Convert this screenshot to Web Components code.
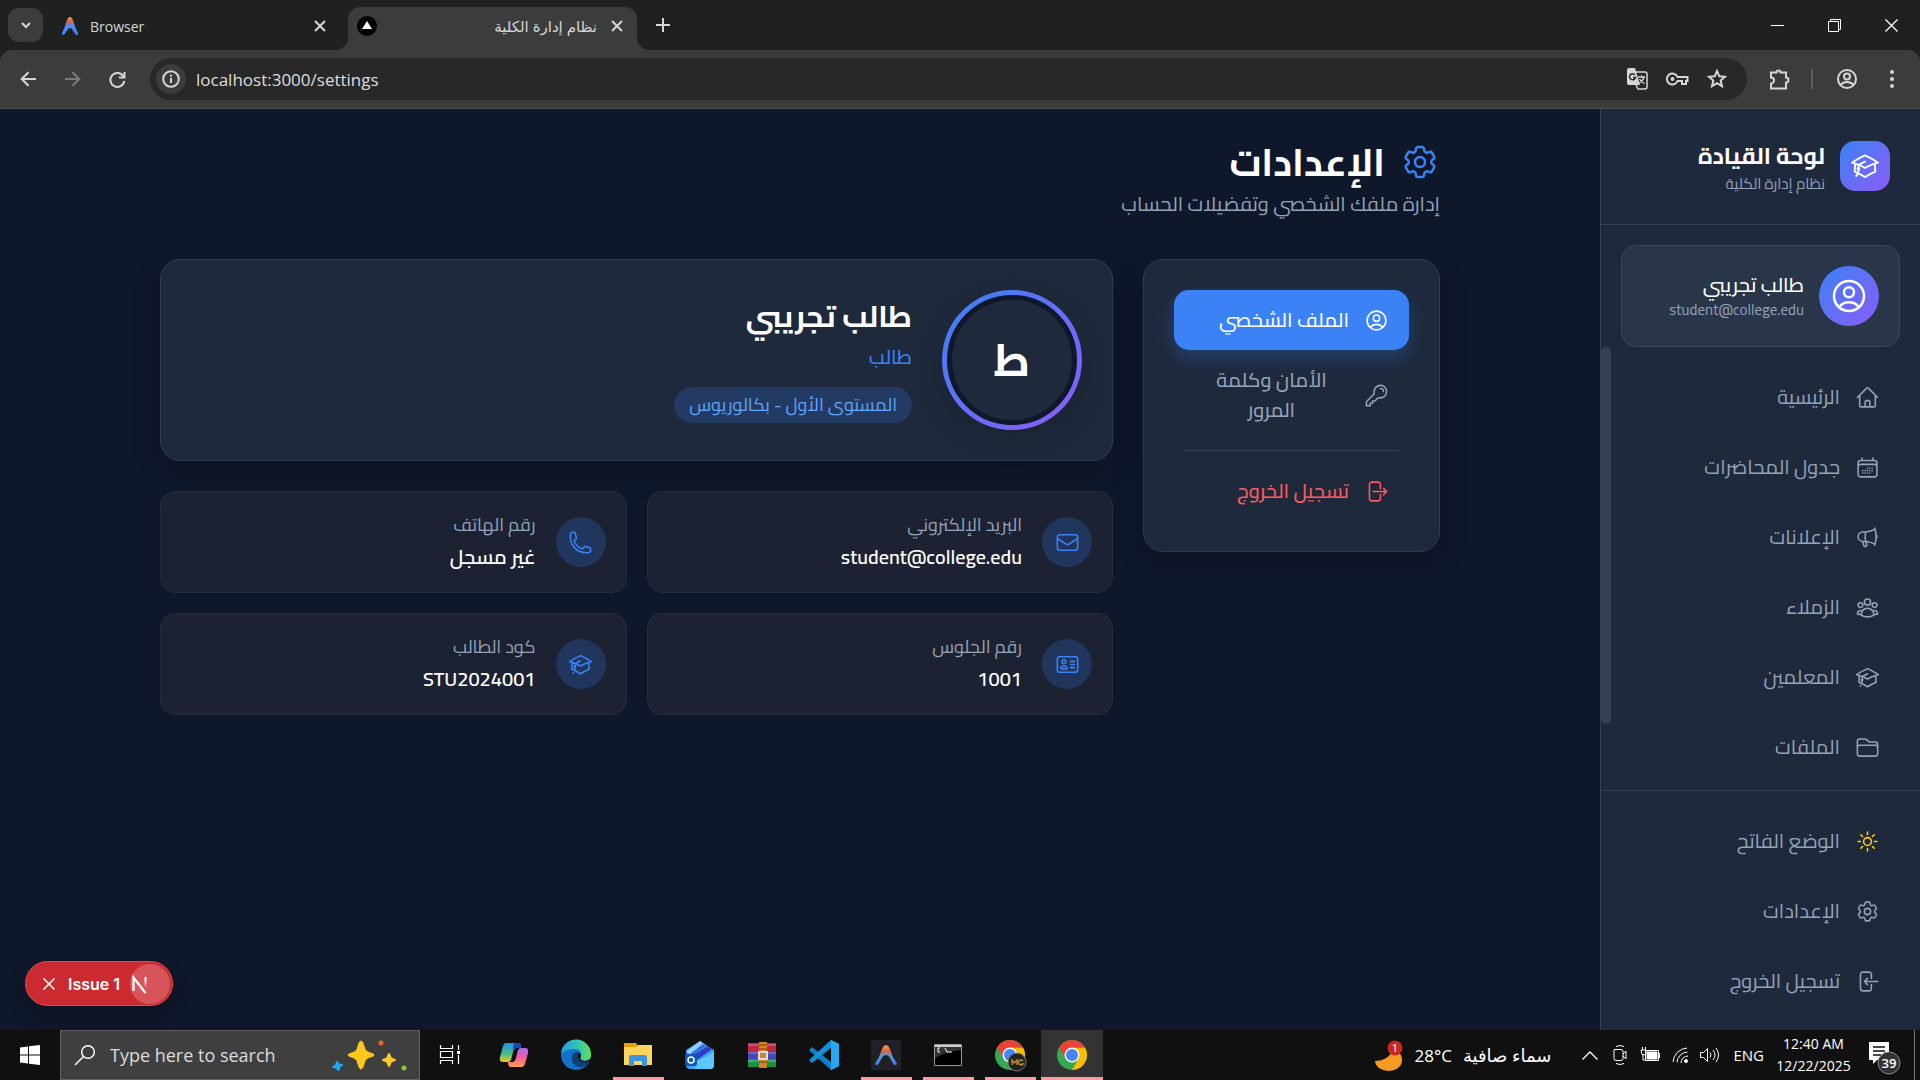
<!DOCTYPE html>
<html lang="ar">
<head>
<meta charset="utf-8">
<title>نظام إدارة الكلية</title>
<style>
:root
{
    --ui: "Segoe UI", "Open Sans", "Noto Sans", "DejaVu Sans", sans-serif;
    --app: Cairo, "Noto Sans", "DejaVu Sans", sans-serif;
    --page: #0f172a;
    --panel: #1e293b;
    --line: #334155;
    --muted: #94a3b8;
    --blue: #3b82f6;
    --grad: linear-gradient(135deg, #3b82f6, #8b5cf6);
}

body
{
    margin: 0;
    min-height: 100vh;
    display: flex;
    flex-direction: column;
    background: var(--page);
    font-family: var(--app);
    color: #fff;
}
</style>
</head>
<body>

<browser-bar></browser-bar>

<app-shell dir="rtl">
    <side-bar slot="side">
        <user-chip slot="user" name="طالب تجريبي" mail="student@college.edu"></user-chip>
        <nav-item icon="home">الرئيسية</nav-item>
        <nav-item icon="calendar">جدول المحاضرات</nav-item>
        <nav-item icon="megaphone">الإعلانات</nav-item>
        <nav-item icon="group">الزملاء</nav-item>
        <nav-item icon="cap">المعلمين</nav-item>
        <nav-item icon="folder">الملفات</nav-item>
        <nav-item slot="foot" icon="sun" tint="#facc15">الوضع الفاتح</nav-item>
        <nav-item slot="foot" icon="cog">الإعدادات</nav-item>
        <nav-item slot="foot" icon="enter">تسجيل الخروج</nav-item>
    </side-bar>
    <settings-page>
        <settings-menu slot="menu"></settings-menu>
        <profile-card></profile-card>
        <info-grid>
            <info-card icon="mail" label="البريد الإلكتروني">student@college.edu</info-card>
            <info-card icon="phone" label="رقم الهاتف">غير مسجل</info-card>
            <info-card icon="id" label="رقم الجلوس">1001</info-card>
            <info-card icon="cap" label="كود الطالب">STU2024001</info-card>
        </info-grid>
    </settings-page>
</app-shell>

<issue-badge></issue-badge>
<task-bar></task-bar>

<script>
const icons = {
    cap: 'M4.26 10.147a60.438 60.438 0 0 0-.491 6.347A48.62 48.62 0 0 1 12 20.904a48.62 48.62 0 0 1 8.232-4.41 60.46 60.46 0 0 0-.491-6.347m-15.482 0a50.636 50.636 0 0 0-2.658-.813A59.906 59.906 0 0 1 12 3.493a59.903 59.903 0 0 1 10.399 5.84c-.896.248-1.783.52-2.658.814m-15.482 0A50.717 50.717 0 0 1 12 13.489a50.702 50.702 0 0 1 7.74-3.342M6.75 15a.75.75 0 1 0 0-1.5.75.75 0 0 0 0 1.5Zm0 0v-3.675A55.378 55.378 0 0 1 12 8.443m-7.007 11.55A5.981 5.981 0 0 0 6.75 15.75v-1.5',
    home: 'm2.25 12 8.954-8.955c.44-.439 1.152-.439 1.591 0L21.75 12M4.5 9.75v10.125c0 .621.504 1.125 1.125 1.125H9.75v-4.875c0-.621.504-1.125 1.125-1.125h2.25c.621 0 1.125.504 1.125 1.125V21h4.125c.621 0 1.125-.504 1.125-1.125V9.75M8.25 21h8.25',
    calendar: 'M6.75 3v2.25M17.25 3v2.25M3 18.75V7.5a2.25 2.25 0 0 1 2.25-2.25h13.5A2.25 2.25 0 0 1 21 7.5v11.25m-18 0A2.25 2.25 0 0 0 5.25 21h13.5A2.25 2.25 0 0 0 21 18.75m-18 0v-7.5A2.25 2.25 0 0 1 5.25 9h13.5A2.25 2.25 0 0 1 21 11.25v7.5m-9-6h.008v.008H12v-.008ZM12 15h.008v.008H12V15Zm0 2.25h.008v.008H12v-.008ZM9.75 15h.008v.008H9.75V15Zm0 2.25h.008v.008H9.75v-.008ZM7.5 15h.008v.008H7.5V15Zm0 2.25h.008v.008H7.5v-.008Zm6.75-4.5h.008v.008h-.008v-.008Zm0 2.25h.008v.008h-.008V15Zm0 2.25h.008v.008h-.008v-.008Zm2.25-4.5h.008v.008H16.5v-.008Zm0 2.25h.008v.008H16.5V15Z',
    megaphone: 'M10.34 15.84c-.688-.06-1.386-.09-2.09-.09H7.5a4.5 4.5 0 1 1 0-9h.75c.704 0 1.402-.03 2.09-.09m0 9.18c.253.962.584 1.892.985 2.783.247.55.06 1.21-.463 1.511l-.657.38c-.551.318-1.26.117-1.527-.461a20.845 20.845 0 0 1-1.44-4.282m3.102.069a18.03 18.03 0 0 1-.59-4.59c0-1.586.205-3.124.59-4.59m0 9.18a23.848 23.848 0 0 1 8.835 2.535M10.34 6.66a23.847 23.847 0 0 0 8.835-2.535m0 0A23.74 23.74 0 0 0 18.795 3m.38 1.125a23.91 23.91 0 0 1 1.014 5.395m-1.014 8.855c-.118.38-.245.754-.38 1.125m.38-1.125a23.91 23.91 0 0 0 1.014-5.395m0-3.46c.495.413.811 1.035.811 1.73 0 .695-.316 1.317-.811 1.73m0-3.46a24.347 24.347 0 0 1 0 3.46',
    group: 'M18 18.72a9.094 9.094 0 0 0 3.741-.479 3 3 0 0 0-4.682-2.72m.94 3.198.001.031c0 .225-.012.447-.037.666A11.944 11.944 0 0 1 12 21c-2.17 0-4.207-.576-5.963-1.584A6.062 6.062 0 0 1 6 18.719m12 0a5.971 5.971 0 0 0-.941-3.197m0 0A5.995 5.995 0 0 0 12 12.75a5.995 5.995 0 0 0-5.058 2.772m0 0a3 3 0 0 0-4.681 2.72 8.986 8.986 0 0 0 3.74.477m.94-3.197a5.971 5.971 0 0 0-.94 3.197M15 6.75a3 3 0 1 1-6 0 3 3 0 0 1 6 0Zm6 3a2.25 2.25 0 1 1-4.5 0 2.25 2.25 0 0 1 4.5 0Zm-13.5 0a2.25 2.25 0 1 1-4.5 0 2.25 2.25 0 0 1 4.5 0Z',
    folder: 'M2.25 12.75V12A2.25 2.25 0 0 1 4.5 9.75h15A2.25 2.25 0 0 1 21.75 12v.75m-8.69-6.44-2.12-2.12a1.5 1.5 0 0 0-1.061-.44H4.5A2.25 2.25 0 0 0 2.25 6v12a2.25 2.25 0 0 0 2.25 2.25h15A2.25 2.25 0 0 0 21.75 18V9a2.25 2.25 0 0 0-2.25-2.25h-5.379a1.5 1.5 0 0 1-1.06-.44Z',
    sun: 'M12 3v2.25m6.364.386-1.591 1.591M21 12h-2.25m-.386 6.364-1.591-1.591M12 18.75V21m-4.773-4.227-1.591 1.591M5.25 12H3m4.227-4.773L5.636 5.636M15.75 12a3.75 3.75 0 1 1-7.5 0 3.75 3.75 0 0 1 7.5 0Z',
    cog: 'M9.594 3.94c.09-.542.56-.94 1.11-.94h2.593c.55 0 1.02.398 1.11.94l.213 1.281c.063.374.313.686.645.87.074.04.147.083.22.127.325.196.72.257 1.075.124l1.217-.456a1.125 1.125 0 0 1 1.37.49l1.296 2.247a1.125 1.125 0 0 1-.26 1.431l-1.003.827c-.293.241-.438.613-.43.992a7.723 7.723 0 0 1 0 .255c-.008.378.137.75.43.991l1.004.827c.424.35.534.955.26 1.43l-1.298 2.247a1.125 1.125 0 0 1-1.369.491l-1.217-.456c-.355-.133-.75-.072-1.076.124a6.47 6.47 0 0 1-.22.128c-.331.183-.581.495-.644.869l-.213 1.281c-.09.543-.56.94-1.11.94h-2.594c-.55 0-1.019-.398-1.11-.94l-.213-1.281c-.062-.374-.312-.686-.644-.87a6.52 6.52 0 0 1-.22-.127c-.325-.196-.72-.257-1.076-.124l-1.217.456a1.125 1.125 0 0 1-1.369-.49l-1.297-2.247a1.125 1.125 0 0 1 .26-1.431l1.004-.827c.292-.24.437-.613.43-.991a6.932 6.932 0 0 1 0-.255c.007-.38-.138-.751-.43-.992l-1.004-.827a1.125 1.125 0 0 1-.26-1.43l1.297-2.247a1.125 1.125 0 0 1 1.37-.491l1.216.456c.356.133.751.072 1.076-.124.072-.044.146-.086.22-.128.332-.183.582-.495.644-.869l.214-1.28ZM15 12a3 3 0 1 1-6 0 3 3 0 0 1 6 0Z',
    enter: 'M15.75 9V5.25A2.25 2.25 0 0 0 13.5 3h-6a2.25 2.25 0 0 0-2.25 2.25v13.5A2.25 2.25 0 0 0 7.5 21h6a2.25 2.25 0 0 0 2.25-2.25V15M12 9l-3 3m0 0 3 3m-3-3h12.75',
    leave: 'M15.75 9V5.25A2.25 2.25 0 0 0 13.5 3h-6a2.25 2.25 0 0 0-2.25 2.25v13.5A2.25 2.25 0 0 0 7.5 21h6a2.25 2.25 0 0 0 2.25-2.25V15m3 0 3-3m0 0-3-3m3 3H9',
    user: 'M17.982 18.725A7.488 7.488 0 0 0 12 15.75a7.488 7.488 0 0 0-5.982 2.975m11.963 0a9 9 0 1 0-11.963 0m11.963 0A8.966 8.966 0 0 1 12 21a8.966 8.966 0 0 1-5.982-2.275M15 9.75a3 3 0 1 1-6 0 3 3 0 0 1 6 0Z',
    key: 'M15.75 5.25a3 3 0 0 1 3 3m3 0a6 6 0 0 1-7.029 5.912c-.563-.097-1.159.026-1.563.43L10.5 17.25H8.25v2.25H6v2.25H2.25v-2.818c0-.597.237-1.17.659-1.591l6.499-6.499c.404-.404.527-1 .43-1.563A6 6 0 1 1 21.75 8.25Z',
    mail: 'M21.75 6.75v10.5a2.25 2.25 0 0 1-2.25 2.25h-15a2.25 2.25 0 0 1-2.25-2.25V6.75m19.5 0A2.25 2.25 0 0 0 19.5 4.5h-15a2.25 2.25 0 0 0-2.25 2.25m19.5 0v.243a2.25 2.25 0 0 1-1.07 1.916l-7.5 4.615a2.25 2.25 0 0 1-2.36 0L3.32 8.91a2.25 2.25 0 0 1-1.07-1.916V6.75',
    phone: 'M2.25 6.75c0 8.284 6.716 15 15 15h2.25a2.25 2.25 0 0 0 2.25-2.25v-1.372c0-.516-.351-.966-.852-1.091l-4.423-1.106c-.44-.11-.902.055-1.173.417l-.97 1.293c-.282.376-.769.542-1.21.38a12.035 12.035 0 0 1-7.143-7.143c-.162-.441.004-.928.38-1.21l1.293-.97c.363-.271.527-.734.417-1.173L6.963 3.102a1.125 1.125 0 0 0-1.091-.852H4.5A2.25 2.25 0 0 0 2.25 4.5v2.25Z',
    id: 'M15 9h3.75M15 12h3.75M15 15h3.75M4.5 19.5h15a2.25 2.25 0 0 0 2.25-2.25V6.75A2.25 2.25 0 0 0 19.5 4.5h-15a2.25 2.25 0 0 0-2.25 2.25v10.5A2.25 2.25 0 0 0 4.5 19.5Zm6-10.125a1.875 1.875 0 1 1-3.75 0 1.875 1.875 0 0 1 3.75 0Zm1.294 6.336a6.721 6.721 0 0 1-3.17.789 6.721 6.721 0 0 1-3.168-.789 3.376 3.376 0 0 1 6.338 0Z'
}

// every element draws its own template, filled from its attributes
class Base extends HTMLElement
{
    constructor()
    {
        super()
        this.attachShadow({mode:'open'})
    }

    connectedCallback()
    {
        this.shadowRoot.innerHTML = `<style>* { box-sizing: border-box; } :host { display: block; box-sizing: border-box; }
            button { font: inherit; color: inherit; background: none; border: 0; padding: 0; cursor: pointer; }</style>` + this.render()
    }

    at(name)
    {
        return this.getAttribute(name) || ''
    }
}

class LineIcon extends Base
{
    render()
    {
        const size = this.at('size') || 25
        return `<style>:host { flex: none; width: ${size}px; height: ${size}px; } svg { display: block; }</style>
        <svg width="${size}" height="${size}" viewBox="0 0 24 24" fill="none" stroke="currentColor" stroke-width="1.5" stroke-linecap="round" stroke-linejoin="round"><path d="${icons[this.at('name')]}"/></svg>`
    }
}

class BrowserBar extends Base
{
    render()
    {
        return `
        <style>
        :host { flex: none; font-family: var(--ui); color: #d6d6d6; background: #1f2120; }
        svg { display: block; fill: none; stroke: currentColor; stroke-width: 2; }
        .strip { display: flex; align-items: center; height: 50px; padding-left: 8px; font-size: 14px; }
        .strip button, .tools button { flex: none; display: grid; place-items: center; }
        .menu { width: 35px; height: 34px; background: #3c3c3c; border-radius: 11px; }
        .tab { display: flex; align-items: center; width: 289px; height: 43px; margin-top: 7px; padding: 0 14px 5px 9px; gap: 14px; }
        .tab span { flex: 1; }
        .idle { width: 305px; padding: 0 22px 5px 19px; gap: 12px; }
        .live { background: #3c3c3c; border-radius: 12px 12px 0 0; position: relative; font-size: 15px; }
        .live::before, .live::after { content: ""; position: absolute; bottom: 0; width: 12px; height: 12px; }
        .live::before { left: -12px; background: radial-gradient(circle at 0 0, transparent 12px, #3c3c3c 12px); }
        .live::after { right: -12px; background: radial-gradient(circle at 100% 0, transparent 12px, #3c3c3c 12px); }
        .plus { width: 52px; height: 34px; }
        .win { display: flex; margin-left: auto; color: #fff; }
        .win svg { stroke-width: 1; }
        .win button { width: 57px; height: 48px; }
        .tools { display: flex; align-items: center; height: 59px; padding: 0 6px 0 5px; background: #3c3c3c; border-radius: 12px 12px 0 0; border-bottom: 1px solid #4a4a4a; }
        .tools > button { width: 45px; height: 40px; }
        .address { flex: 1; display: flex; align-items: center; height: 42px; margin-left: 10px; padding: 0 10px 0 6px; background: #282828; border-radius: 21px; }
        .info { width: 30px; height: 30px; border-radius: 15px; background: #3c3c3c; }
        .address input { flex: 1; margin-left: 10px; padding: 0; border: 0; background: none; color: #dedede; font: 17px var(--ui); }
        .address .act { width: 40px; height: 40px; }
        .tools .dim { color: #7a7a7a; }
        .tools .ext { width: 64px; }
        hr { width: 2px; height: 20px; margin: 0 11px 0 0; border: 0; background: #5c5c5c; }
        </style>
        <div class="strip">
            <button class="menu" aria-label="tabs"><svg width="12" height="12" viewBox="0 0 12 12"><path d="M2 4l4 4 4-4"/></svg></button>
            <div class="tab idle">
                <svg width="16" height="18" viewBox="0 0 16 18"><defs><linearGradient id="g" x2="0" y2="1"><stop offset="0" stop-color="#f2a33a"/><stop offset=".25" stop-color="#e0604c"/><stop offset=".5" stop-color="#4b8df8"/><stop offset="1" stop-color="#3b82f6"/></linearGradient></defs><path d="M8 0c3 0 4 7 6 12 1 2 3 5 1.500 6C12 18 11 11 8 11s-4 7-7.500 7C-1 17 1 14 2 12 4 7 5 0 8 0z" fill="url(#g)" stroke="none"/></svg>
                <span>Browser</span>
                <button aria-label="close"><svg width="12" height="12" viewBox="0 0 12 12"><path d="M1 1l10 10M11 1L1 11"/></svg></button>
            </div>
            <div class="tab live">
                <svg width="20" height="20" viewBox="0 0 20 20"><circle cx="10" cy="10" r="10" fill="#000" stroke="none"/><path d="M10 5l5 8H5z" fill="#fff" stroke="none"/></svg>
                <span dir="rtl">نظام إدارة الكلية</span>
                <button aria-label="close"><svg width="12" height="12" viewBox="0 0 12 12"><path d="M1 1l10 10M11 1L1 11"/></svg></button>
            </div>
            <button class="plus" aria-label="new tab"><svg width="14" height="14" viewBox="0 0 14 14"><path d="M7 0v14M0 7h14"/></svg></button>
            <div class="win">
                <button aria-label="minimize"><svg width="13" height="13" viewBox="0 0 13 13"><path d="M0 6.500h13"/></svg></button>
                <button aria-label="restore"><svg width="13" height="13" viewBox="0 0 13 13"><path d="M.5 2.500h10v10H.5zM2.500 2.500v-2h10v10h-2"/></svg></button>
                <button aria-label="close"><svg width="13" height="13" viewBox="0 0 13 13" style="stroke-width:1.300"><path d="M.5.5l12 12M12.500.5l-12 12"/></svg></button>
            </div>
        </div>
        <div class="tools">
            <button aria-label="back"><svg width="16" height="16" viewBox="0 0 16 16"><path d="M16 8H2M8.500 1.200L1.700 8l6.800 6.800"/></svg></button>
            <button class="dim" aria-label="forward"><svg width="16" height="16" viewBox="0 0 16 16"><path d="M0 8h14M7.500 1.200L14.300 8l-6.800 6.800"/></svg></button>
            <button aria-label="reload"><svg width="17" height="17" viewBox="0 0 17 17"><path d="M14.500 5.500A7 7 0 1 0 15.300 10M15.500 1v5.500H10"/></svg></button>
            <div class="address">
                <button class="info" aria-label="site info"><svg width="18" height="18" viewBox="0 0 18 18"><circle cx="9" cy="9" r="7.800"/><path d="M9 8v5M9 4.800v2"/></svg></button>
                <input aria-label="address" value="localhost:3000/settings">
                <button class="act" aria-label="translate"><svg width="22" height="22" viewBox="0 0 22 22"><path d="M10 4h9a2 2 0 0 1 2 2v13a2 2 0 0 1-2 2h-7l-2-4" style="stroke-width:1.500"/><path d="M1 2a2 2 0 0 1 2-2h6l5 17H3a2 2 0 0 1-2-2z" fill="currentColor" stroke="none"/><path d="M9 7a3 3 0 1 0 .5 2.500H7" style="stroke:#282828;stroke-width:1.500"/><path d="M12 9h7M15.500 7.500V9M18 9c-1 4-3 5-5 6M13.500 11c1 2 3 3.500 5 4.500" style="stroke-width:1.300"/></svg></button>
                <button class="act" aria-label="passwords"><svg width="24" height="16" viewBox="0 0 24 16"><path d="M12.500 6h10v4H21v3h-4v-3h-4.500a5.500 5.500 0 1 1 0-4z"/><circle cx="7.500" cy="8" r="2" fill="currentColor" stroke="none"/></svg></button>
                <button class="act" aria-label="bookmark"><svg width="20" height="20" viewBox="0 0 20 20"><path d="M10 2l2.300 5.300 5.700.5-4.300 3.800 1.300 5.600-5-3-5 3 1.300-5.600L2 7.800l5.700-.5z"/></svg></button>
            </div>
            <button class="ext" aria-label="extensions"><svg width="22" height="22" viewBox="0 0 22 22"><path d="M3 4.500h5.500a2 2 0 0 1 4 0H18v5a2 2 0 0 1 0 5v6H3v-5a3 3 0 0 0 0-6z"/></svg></button>
            <hr>
            <button aria-label="profile"><svg width="22" height="22" viewBox="0 0 22 22"><circle cx="11" cy="11" r="9"/><circle cx="11" cy="8.500" r="3"/><path d="M4.500 17c3-4 10-4 13 0"/></svg></button>
            <button aria-label="more"><svg width="6" height="18" viewBox="0 0 6 18"><g fill="currentColor" stroke="none"><circle cx="3" cy="2" r="2"/><circle cx="3" cy="9" r="2"/><circle cx="3" cy="16" r="2"/></g></svg></button>
        </div>`
    }
}

class AppShell extends Base
{
    render()
    {
        return `
        <style>
        :host { flex: 1; display: flex; }
        ::slotted(side-bar) { flex: none; width: 320px; }
        main { flex: 1; min-width: 0; }
        </style>
        <slot name="side"></slot>
        <main><slot></slot></main>`
    }
}

class SideBar extends Base
{
    render()
    {
        return `
        <style>
        :host { display: flex; flex-direction: column; background: var(--panel); border-left: 1px solid var(--line); }
        header { display: flex; gap: 15px; padding: 32px 30px 27px; border-bottom: 1px solid var(--line); }
        .logo { flex: none; width: 50px; height: 50px; display: grid; place-items: center; border-radius: 15px; background: var(--grad); }
        h2 { margin: 0; font-size: 23px; line-height: 30px; }
        p { margin: 0; font-size: 15px; line-height: 26px; color: var(--muted); }
        .user { padding: 20px 20px 0; }
        nav { flex: 1; position: relative; padding: 20px 20px 13px; display: flex; flex-direction: column; gap: 10px; }
        /* scroll thumb floats over the list edge */
        nav::after { content: ""; position: absolute; left: 0; top: 0; width: 10px; height: 85%; border-radius: 5px; background: var(--line); }
        footer { display: flex; flex-direction: column; gap: 10px; padding: 20px 20px 19px; border-top: 1px solid var(--line); }
        </style>
        <header>
            <div class="logo"><line-icon name="cap" size="30"></line-icon></div>
            <div><h2>لوحة القيادة</h2><p>نظام إدارة الكلية</p></div>
        </header>
        <div class="user"><slot name="user"></slot></div>
        <nav><slot></slot></nav>
        <footer><slot name="foot"></slot></footer>`
    }
}

class UserChip extends Base
{
    render()
    {
        return `
        <style>
        :host { display: flex; gap: 15px; align-items: center; padding: 20px; background: #293548; border: 1px solid #3a475a; border-radius: 15px; }
        .face { flex: none; width: 60px; height: 60px; display: grid; place-items: center; border-radius: 50%; background: var(--grad); }
        b { display: block; font-size: 20px; font-weight: 500; line-height: 28px; }
        small { display: block; font-size: 15px; line-height: 22px; color: var(--muted); }
        </style>
        <div class="face"><line-icon name="user" size="40"></line-icon></div>
        <div><b>${this.at('name')}</b><small>${this.at('mail')}</small></div>`
    }
}

class NavItem extends Base
{
    render()
    {
        return `
        <style>
        a { display: flex; align-items: center; gap: 15px; height: 60px; padding: 0 20px; color: var(--muted); text-decoration: none; font-size: 20px; line-height: 30px; white-space: nowrap; }
        line-icon { color: ${this.at('tint') || 'inherit'}; }
        </style>
        <a href="#"><line-icon name="${this.at('icon')}"></line-icon><slot></slot></a>`
    }
}

class SettingsPage extends Base
{
    render()
    {
        return `
        <style>
        :host { max-width: 1280px; margin: 0 auto; padding-top: 30px; }
        h1 { display: flex; align-items: center; gap: 15px; margin: 0 0 4px; font-size: 38px; line-height: 46px; }
        h1 line-icon { color: var(--blue); }
        p { margin: 0 0 40px; font-size: 20px; line-height: 30px; color: var(--muted); }
        .cols { display: flex; align-items: flex-start; gap: 30px; }
        .menu { flex: none; width: 297px; }
        .body { flex: 1; display: flex; flex-direction: column; gap: 30px; }
        </style>
        <h1><line-icon name="cog" size="40"></line-icon>الإعدادات</h1>
        <p>إدارة ملفك الشخصي وتفضيلات الحساب</p>
        <div class="cols">
            <div class="menu"><slot name="menu"></slot></div>
            <div class="body"><slot></slot></div>
        </div>`
    }
}

class SettingsMenu extends Base
{
    render()
    {
        return `
        <style>
        :host { padding: 30px; background: var(--panel); border: 1px solid #303c4e; border-radius: 20px; box-shadow: 0 10px 30px rgba(0, 0, 0, .15); }
        button { display: flex; align-items: center; gap: 15px; width: 100%; padding: 15px 20px; border-radius: 15px; font-size: 20px; font-weight: 500; line-height: 30px; color: var(--muted); }
        .on { background: var(--blue); color: #fff; box-shadow: 0 8px 20px rgba(59, 130, 246, .3); }
        .two span { flex: 1; }
        .out { color: #ff5a5f; }
        hr { margin: 10px; border: 0; height: 1px; background: #374355; }
        </style>
        <button class="on"><line-icon name="user"></line-icon><span>الملف الشخصي</span></button>
        <button class="two"><line-icon name="key"></line-icon><span>الأمان وكلمة المرور</span></button>
        <hr>
        <button class="out"><line-icon name="leave"></line-icon><span>تسجيل الخروج</span></button>`
    }
}

class ProfileCard extends Base
{
    render()
    {
        return `
        <style>
        :host { display: flex; align-items: center; gap: 30px; padding: 30px; background: var(--panel); border: 1px solid #303c4e; border-radius: 20px; box-shadow: 0 10px 30px rgba(0, 0, 0, .15); }
        .ring { flex: none; width: 140px; height: 140px; padding: 5px; border-radius: 50%; background: var(--grad); box-shadow: 0 10px 30px rgba(0, 0, 0, .15); }
        .face { width: 130px; height: 130px; display: grid; place-items: center; border: 5px solid var(--page); border-radius: 50%; background: var(--panel); font-size: 45px; font-weight: 700; line-height: 60px; }
        h2 { margin: 0 0 8px; font-size: 30px; line-height: 36px; }
        p { margin: 0 0 15px; font-size: 20px; font-weight: 500; line-height: 30px; color: var(--blue); }
        .level { display: inline-block; padding: 0 15px; border-radius: 18px; background: #233a62; color: #60a5fa; font-size: 18px; line-height: 36px; vertical-align: top; }
        </style>
        <div class="ring"><div class="face">ط</div></div>
        <div><h2>طالب تجريبي</h2><p>طالب</p><span class="level">المستوى الأول - بكالوريوس</span></div>`
    }
}

class InfoGrid extends Base
{
    render()
    {
        return `
        <style>:host { display: grid; grid-template-columns: 1fr 1fr; gap: 20px; }</style>
        <slot></slot>`
    }
}

class InfoCard extends Base
{
    render()
    {
        return `
        <style>
        :host { display: flex; align-items: center; gap: 20px; padding: 20px; background: #1d2233; border: 1px solid #272c3d; border-radius: 15px; }
        .dot { flex: none; width: 50px; height: 50px; display: grid; place-items: center; border-radius: 50%; background: #21365c; color: var(--blue); }
        small { display: block; margin-bottom: 4px; font-size: 18px; line-height: 26px; color: var(--muted); }
        b { display: block; font-size: 20px; font-weight: 600; line-height: 30px; }
        </style>
        <div class="dot"><line-icon name="${this.at('icon')}"></line-icon></div>
        <div><small>${this.at('label')}</small><b><slot></slot></b></div>`
    }
}

class IssueBadge extends Base
{
    render()
    {
        return `
        <style>
        /* dev overlay, floats above the page corner */
        :host { position: absolute; left: 25px; bottom: 74px; display: flex; align-items: center; height: 45px; padding: 0 2px 0 17px; background: #ca2a30; border: 1px solid #e5484d; border-radius: 23px; font: 600 16px Inter, sans-serif; box-shadow: 0 8px 20px rgba(0, 0, 0, .2); }
        svg { display: block; fill: none; stroke: #fff; }
        .label { margin: 0 10px 0 13px; }
        .n { width: 40px; height: 40px; border-radius: 50%; background: #d6555b; }
        </style>
        <button aria-label="dismiss"><svg width="12" height="12" viewBox="0 0 12 12" stroke-width="1.500"><path d="M.5.5l11 11M11.500.5l-11 11"/></svg></button>
        <button class="label">Issue 1</button>
        <button class="n" aria-label="dev tools"><svg width="40" height="40" viewBox="0 0 40 40"><defs><linearGradient id="f" x2="0" y2="1"><stop offset=".2" stop-color="#fff"/><stop offset="1" stop-color="#fff" stop-opacity="0"/></linearGradient></defs><path d="M3.500 27V13.500L15.500 29" stroke-width="2.200"/><path d="M14.500 13h2v11h-2z" fill="url(#f)" stroke="none"/></svg></button>`
    }
}

class TaskBar extends Base
{
    render()
    {
        const chrome = `<circle cx="15" cy="15" r="15" fill="#34a853"/><path d="M15 7.500h13A15 15 0 0 1 15 30l6.500-11.250z" fill="#fbbc04"/><path d="M2 7.500A15 15 0 0 1 28 7.500H15L8.500 18.750z" fill="#ea4335"/><circle cx="15" cy="15" r="7.500" fill="#fff"/><circle cx="15" cy="15" r="6" fill="#4285f4"/>`
        const apps = [
            ['task view', '', `<g fill="none" stroke="#fff"><path d="M3.500 5v3.500h12V5M3.500 24v-3.500h12V24M3.500 11.500h12v6h-12zM21.500 5v5M21.500 15v9" stroke-width="1.200"/></g><path d="M20 11h3v3h-3z" fill="#fff"/>`],
            ['copilot', '', `<defs><linearGradient id="c1" x2="0" y2="1"><stop stop-color="#2196e8"/><stop offset=".55" stop-color="#3fbd8b"/><stop offset="1" stop-color="#f5c91d"/></linearGradient><linearGradient id="c2" x2="0" y2="1"><stop stop-color="#a76bf5"/><stop offset=".5" stop-color="#ef5d9d"/><stop offset="1" stop-color="#ff9f4a"/></linearGradient></defs><path d="M7 3h12q3 0 3 5h-5q-2 0-3 4l-2 8q-1 2-3 2H4q-4 0-3-5L4 6q1-3 3-3z" fill="url(#c1)"/><path d="M15 3h5q1 0 2 5h-6q-2 0-3 3z" fill="#1a43c4"/><path d="M23 27H12q-3 0-3-5h4q3 0 4-4l2-8q1-2 3-2h4q4 0 3 5l-3 11q-1 3-3 3z" fill="url(#c2)"/>`],
            ['edge', '', `<defs><linearGradient id="e1"><stop stop-color="#259fdf"/><stop offset=".6" stop-color="#31c8b2"/><stop offset="1" stop-color="#66df46"/></linearGradient></defs><circle cx="15" cy="15" r="15" fill="#1373c8"/><path d="M0 14A15 15 0 0 1 30 15c0 7-10 7-11 3 3-3 1-9-5-9-7 0-13 3-14 5z" fill="url(#e1)"/><path d="M19 18c1 4 7 5 9 4-3 5-9 7-14 3s-4-11 1-13c5 0 6 4 4 6z" fill="#103f73"/><path d="M19 18c1 4 8 4 11 0l-2 4c-3 1-9 0-11-4-1-3 1-4 1-5 2 1 2 4 1 5z" fill="#101010"/>`],
            ['explorer', 'run', `<path d="M1 3h12l2 3v6H1z" fill="#e3a008"/><path d="M1 7h12l2-2h14v20H1z" fill="#ffd45c"/><path d="M6 26V17q0-2 2-2h14q2 0 2 2v9h-5v-5h-8v5z" fill="#3d95dd"/>`],
            ['outlook', '', `<path d="M15 1L29 10v15q0 4-4 4H5q-4 0-4-4V10z" fill="#3f9cf4"/><path d="M2 11L15 1l5 4L5 16z" fill="#8fd0ff"/><path d="M7 16L23 6l4 3L12 20z" fill="#2b3cc4"/><path d="M5 14L18 4l3 2L7 16z" fill="#2f6fe0"/><path d="M12 21l17-9v13q0 4-4 4H9z" fill="#58c8ff"/><rect y="14" width="12" height="12" rx="2" fill="#0f58b8"/><circle cx="6" cy="20" r="3" fill="none" stroke="#fff" stroke-width="1.500"/>`],
            ['winrar', '', `<path d="M1 3h28v8H1z" fill="#c02747"/><path d="M1 11h28v8H1z" fill="#4646b8"/><path d="M1 19h28v8H1z" fill="#169147"/><path d="M1 5h28M1 13h28M1 21h28" stroke="#fff" stroke-opacity=".4"/><path d="M12 2h8v26h-8z" fill="#d68420"/><path d="M12 5h8M12 9h8M12 22h8" stroke="#704010"/><rect x="12" y="12" width="8" height="7" fill="none" stroke="#ddd" stroke-width="2"/>`],
            ['code', '', `<path d="M22 0l8 4v22l-8 4L2 12l-2-2 3-3 19 15z" fill="#0d7fc9"/><path d="M22 0v8L3 23l-3-3z" fill="#1590d8"/><path d="M22 0l8 4v22l-8 4z" fill="#27a7f2"/>`],
            ['antigravity', 'run', `<defs><linearGradient id="a1" x2="0" y2="1"><stop stop-color="#f5a13b"/><stop offset=".3" stop-color="#e4604e"/><stop offset=".55" stop-color="#4b9bd0"/><stop offset="1" stop-color="#3f7cf5"/></linearGradient></defs><path d="M0 0h30v30H0z" fill="#202127"/><path d="M15 5c4 0 5 9 8 14 2 3 4 5 2 6-4 1-5-10-10-10S9 26 5 25c-2-1 0-3 2-6 3-5 4-14 8-14z" fill="url(#a1)"/>`],
            ['terminal', 'run', `<path d="M1.500 4.500h27v21h-27z" fill="#000" stroke="#999"/><path d="M2 5h26v2H2z" fill="#ccc"/><path d="M2 7h26v3Q12 12 2 18z" fill="#333"/><path d="M7 8H5v4h2M9 9v0M9 12v0M12 8l2 4h5" fill="none" stroke="#fff"/>`],
            ['chrome profile', 'run', chrome + `<circle cx="22" cy="22" r="9" fill="#222" stroke="#777"/><path d="M17 25v-5l2.500 3 2.500-3v5M28 21a2.500 2.500 0 1 0 0 3h-2" fill="none" stroke="#c79332" stroke-width="1.300"/>`],
            ['chrome', 'run on', chrome]
        ]
        return `
        <style>
        :host { flex: none; display: flex; height: 50px; background: #101010; font-family: var(--ui); color: #fff; }
        svg { display: block; overflow: visible; }
        button { flex: none; display: grid; place-items: center; height: 50px; }
        .start { width: 60px; }
        .search { display: flex; align-items: center; width: 360px; margin-right: 1px; padding: 0 12px 0 14px; gap: 15px; background: #3f3f3f; border: 1px solid #636363; }
        .search input { flex: 1; min-width: 0; padding: 0; border: 0; background: none; color: #fff; font: 18px var(--ui); }
        .search input::placeholder { color: #dcdcdc; opacity: 1; }
        .app { width: 62px; border-bottom: 3px solid transparent; padding-top: 3px; }
        .run { background: linear-gradient(#ff99a4, #ff99a4) center bottom / 51px 3px no-repeat border-box; }
        .on { background: #333; border-bottom-color: #ff99a4; }
        .tray { display: flex; align-items: center; margin-left: auto; font-size: 17px; }
        .tray svg { fill: none; stroke: #fff; }
        .weather { display: flex; gap: 11px; align-items: center; margin-right: 24px; }
        .weather [dir] { font-size: 18px; }
        .weather svg { stroke: none; }
        .ic { width: 30px; }
        .lang { margin: 0 11px 0 8px; font-size: 15px; }
        .time { width: 77px; font-size: 14px; line-height: 22px; text-align: center; white-space: nowrap; display: block; }
        .note { width: 63px; padding-left: 4px; border-right: 1px solid #777; margin-right: 5px; }
        text { font-family: var(--ui); fill: #fff; stroke: none; }
        </style>
        <button class="start" aria-label="start"><svg width="20" height="20" viewBox="0 0 20 20" fill="#fff"><path d="M0 2.500l8-1v8H0zM9 1.300L20 0v9.500H9zM0 10.500h8v8l-8-1zM9 10.500h11V20L9 18.700z"/></svg></button>
        <div class="search">
            <svg width="20" height="20" viewBox="0 0 20 20" fill="none" stroke="#fff" stroke-width="1.400"><circle cx="13" cy="7" r="6.300"/><path d="M8.500 11.500L0 20"/></svg>
            <input type="search" aria-label="search" placeholder="Type here to search">
            <svg width="76" height="36" viewBox="0 0 76 36"><path d="M30 4q2 0 3.500 7 1 4 7.500 5.500 4 1.500 0 3-6.500 1.500-7.500 5.500-1.500 7-3.500 7t-3.500-7q-1-4-7.500-5.500-4-1.500 0-3 6.500-1.500 7.500-5.500 1.500-7 3.500-7z" fill="#fdc81a" stroke="#fdc81a"/><path d="M58 17l2 4.500 4 1.500-4 1.500-2 4.500-2-4.500-4-1.500 4-1.500z" fill="#fdc42c" stroke="#fdc42c" stroke-width="2" stroke-linejoin="round"/><path d="M6 25l2 2.500 3 .5-2.500 2-1 3-2.500-2.500-3-.5 3-2z" fill="#1aa7ee" stroke="#1aa7ee" stroke-width="2" stroke-linejoin="round"/><circle cx="50" cy="6" r="2.500" fill="#f2652a"/><circle cx="73" cy="31" r="2.500" fill="#8cc63f"/></svg>
        </div>
        ${apps.map(([name, state, art]) => `<button class="app ${state}" aria-label="${name}"><svg width="30" height="30" viewBox="0 0 30 30">${art}</svg></button>`).join('')}
        <div class="tray">
            <div class="weather"><svg width="28" height="30" viewBox="0 0 28 30"><path d="M0 21c8 0 16-4 18-12 6 2 9 6 9 11a13 10 0 0 1-27 1z" fill="#f59a23"/><circle cx="20" cy="8" r="7.500" fill="#c42b1c"/><text x="20" y="12" font-size="11" text-anchor="middle">1</text></svg><span>28°C</span><span dir="rtl">سماء صافية</span></div>
            <button class="ic" aria-label="hidden icons"><svg width="16" height="9" viewBox="0 0 16 9" stroke-width="1.300"><path d="M.5 8.500L8 1l7.500 7.500"/></svg></button>
            <button class="ic" aria-label="meet now"><svg width="16" height="20" viewBox="0 0 16 20"><path d="M2 4.500h7q2 0 2 2v7q0 2-2 2H4q-2 0-2-2zM11 9l3-3v8l-3-3M4 1.500q4-2 8 0M4 18.500q4 2 8 0"/></svg></button>
            <button class="ic" aria-label="battery"><svg width="20" height="16" viewBox="0 0 20 16"><path d="M5.500 3.500h13v10h-13zM19.500 6v5M1 3h5v3q-1 3-4 1.500zM2.500 0v3M5.500 0v3M3 7v6h3"/><path d="M7 5h10v7H7z" fill="#fff"/></svg></button>
            <button class="ic" aria-label="network"><svg width="17" height="17" viewBox="0 0 17 17"><path d="M1 15A15 15 0 0 1 15 1M5 15.500A11 11 0 0 1 15.500 5M9 16a7 7 0 0 1 7-7"/><circle cx="14" cy="14" r="1.500" fill="#fff"/></svg></button>
            <button class="ic" aria-label="volume"><svg width="20" height="18" viewBox="0 0 20 18"><path d="M.5 6.500h3l4-4v13l-4-4h-3zM10 6.500q2 2.500 0 5M13 4q4 5 0 10M16 2q5 7 0 14"/></svg></button>
            <button class="lang">ENG</button>
            <button class="time">12:40 AM<br>12/22/2025</button>
            <button class="note" aria-label="notifications"><svg width="32" height="34" viewBox="0 0 32 34"><path d="M0 4h20v18H8l-4 4v-4H0z" fill="#fff" stroke="none"/><path d="M4 9h12M4 13h12M4 17h8" stroke="#101010" stroke-width="1.500"/><circle cx="20" cy="25" r="11" fill="#333" stroke="#888"/><text x="20" y="30" font-size="13" font-weight="600" text-anchor="middle">39</text></svg></button>
        </div>`
    }
}

customElements.define('line-icon', LineIcon)
customElements.define('browser-bar', BrowserBar)
customElements.define('app-shell', AppShell)
customElements.define('side-bar', SideBar)
customElements.define('user-chip', UserChip)
customElements.define('nav-item', NavItem)
customElements.define('settings-page', SettingsPage)
customElements.define('settings-menu', SettingsMenu)
customElements.define('profile-card', ProfileCard)
customElements.define('info-grid', InfoGrid)
customElements.define('info-card', InfoCard)
customElements.define('issue-badge', IssueBadge)
customElements.define('task-bar', TaskBar)
</script>
</body>
</html>
